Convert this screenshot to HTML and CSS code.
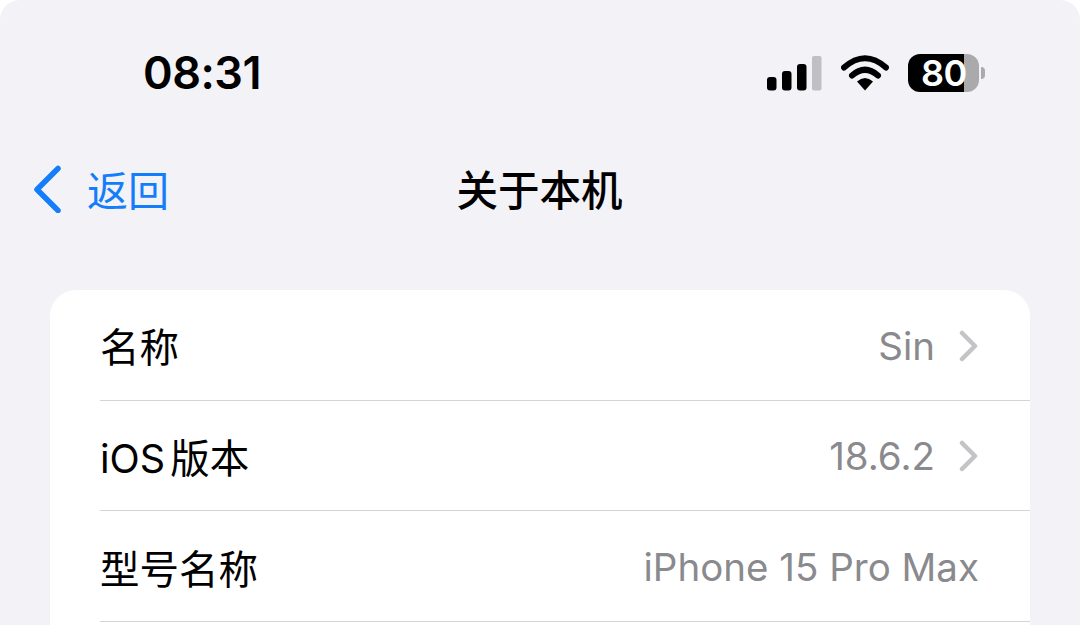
FILE: index.html
```html
<!DOCTYPE html>
<html>
<head>
  <title>关于本机</title>
  <meta name="viewport" content="width=device-width, initial-scale=1.0">
  <link rel="stylesheet" href="styles.css">
</head>
<body>
  <div class="screen">
    <!-- Status bar -->
    <div class="status-bar">
      <span class="time">08:31</span>
      <div class="status-icons">
        <svg class="signal" width="55" height="36" viewBox="0 0 55 36">
          <rect x="0" y="22" width="9.5" height="13.5" rx="3" fill="#000"/>
          <rect x="15" y="16" width="9.5" height="19.5" rx="3" fill="#000"/>
          <rect x="30" y="9" width="9.5" height="26.5" rx="3" fill="#000"/>
          <rect x="45" y="1" width="9.5" height="34.5" rx="2" fill="#c0c0c4"/>
        </svg>
        <svg class="wifi" width="48" height="36" viewBox="0 0 48 36">
          <path d="M3 12.5 Q24 -6 45 12.5" fill="none" stroke="#000" stroke-width="6" stroke-linecap="round"/>
          <path d="M11 20.5 Q24 9 37 20.5" fill="none" stroke="#000" stroke-width="6" stroke-linecap="round"/>
          <path d="M16 26.5 Q24 19.5 32 26.5 L24 35.5 Z" fill="#000"/>
        </svg>
        <div class="battery">
          <div class="battery-body">
            <span class="battery-num">80</span>
          </div>
          <div class="battery-cap"></div>
        </div>
      </div>
    </div>

    <!-- Nav -->
    <div class="nav">
      <div class="back">
        <svg width="30" height="50" viewBox="0 0 30 50">
          <path d="M26 5.5 L5 26.5 L26 47.5" fill="none" stroke="#147dfa" stroke-width="5.5" stroke-linecap="round" stroke-linejoin="round"/>
        </svg>
        <span>返回</span>
      </div>
      <div class="nav-title">关于本机</div>
    </div>

    <!-- Info list -->
    <div class="card">
      <div class="row">
        <span class="label">名称</span>
        <span class="value">Sin</span>
        <svg class="chevron" width="20" height="32" viewBox="0 0 20 32"><path d="M3 3 L16 16 L3 29" fill="none" stroke="#c4c4c7" stroke-width="4.5" stroke-linecap="round" stroke-linejoin="round"/></svg>
      </div>
      <div class="row">
        <span class="label"><span class="latin">iOS</span>版本</span>
        <span class="value">18.6.2</span>
        <svg class="chevron" width="20" height="32" viewBox="0 0 20 32"><path d="M3 3 L16 16 L3 29" fill="none" stroke="#c4c4c7" stroke-width="4.5" stroke-linecap="round" stroke-linejoin="round"/></svg>
      </div>
      <div class="row">
        <span class="label">型号名称</span>
        <span class="value">iPhone 15 Pro Max</span>
      </div>
      <div class="row"></div>
    </div>
  </div>
</body>
</html>
```

FILE: styles.css
```css
html, body {
  margin: 0;
  height: 625px;
  overflow: hidden;
  background-color: #fff;
}
body {
  font-family: Inter, "Noto Sans CJK SC", sans-serif;
  color: #000;
}
.screen {
  height: 625px;
  overflow: hidden;
  background-color: #f2f2f7;
  border-radius: 20px 20px 0 0;
}
.status-bar {
  display: flex;
  justify-content: space-between;
  align-items: center;
  height: 56px;
  padding: 45px 95px 0 143px;
}
.time {
  font-size: 45px;
  font-weight: 600;
  line-height: 56px;
  letter-spacing: -0.5px;
}
.status-icons {
  display: flex;
  align-items: center;
  gap: 19px;
}
.battery {
  display: flex;
  align-items: center;
  gap: 2px;
}
.battery-body {
  width: 71px;
  height: 38px;
  padding-left: 13px;
  box-sizing: border-box;
  border-radius: 12px;
  background: linear-gradient(to right, #000 56px, #aaaaad 56px);
}
.battery-num {
  display: block;
  font-size: 36px;
  font-weight: 600;
  line-height: 38px;
  letter-spacing: -0.5px;
  color: #fff;
}
.battery-cap {
  width: 4px;
  height: 12px;
  border-radius: 0 5px 5px 0;
  background-color: #aaaaad;
}
.nav {
  display: flex;
  align-items: center;
  position: relative;
  height: 60px;
  margin-top: 57px;
  padding-left: 32px;
}
.back {
  display: flex;
  align-items: center;
  gap: 25px;
  font-size: 41px;
  color: #147dfa;
}
.nav-title {
  position: absolute;
  left: 0;
  right: 1px;
  text-align: center;
  font-size: 41.5px;
  font-weight: 500;
}
.card {
  margin: 72px 50px 0;
  background-color: #fff;
  border-radius: 26px;
}
.row {
  display: flex;
  align-items: center;
  height: 110px;
  margin-left: 50px;
  padding-right: 51px;
  border-bottom: 1px solid #d4d4d6;
  font-size: 39.5px;
}
.row:nth-child(-n+2) {
  height: 109.5px;
}
.label {
  flex: 1;
}
.latin {
  margin-right: 5px;
}
.value {
  font-size: 38.5px;
  line-height: 50px;
  padding-top: 2px;
  color: #8a8a8e;
}
.chevron {
  margin-left: 24px;
  margin-top: 2px;
}
```
